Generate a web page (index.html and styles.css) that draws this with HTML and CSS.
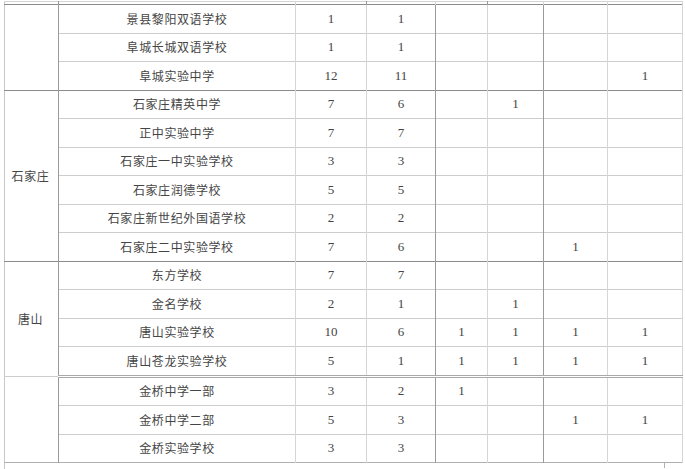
FILE: index.html
```html
<!DOCTYPE html>
<html lang="zh">
<head>
<meta charset="utf-8">
<link rel="stylesheet" href="styles.css">
</head>
<body>
<table class="grid">
  <colgroup>
    <col class="c-region"><col class="c-school"><col class="c-n1"><col class="c-n2"><col class="c-n3"><col class="c-n4"><col class="c-n5"><col class="c-n6">
  </colgroup>
  <tbody>
    <tr class="spacer"><td class="major"></td><td></td><td class="major"></td><td></td><td class="major"></td><td></td><td></td><td></td></tr>
    <tr class="group-top"><td class="region major" rowspan="3"></td><td class="name">景县黎阳双语学校</td><td>1</td><td class="major">1</td><td></td><td class="major"></td><td></td><td></td></tr>
    <tr><td class="name">阜城长城双语学校</td><td>1</td><td class="major">1</td><td></td><td class="major"></td><td></td><td></td></tr>
    <tr><td class="name">阜城实验中学</td><td>12</td><td class="major">11</td><td></td><td class="major"></td><td></td><td>1</td></tr>
    <tr class="group-top"><td class="region major" rowspan="6">石家庄</td><td class="name">石家庄精英中学</td><td>7</td><td class="major">6</td><td></td><td class="major">1</td><td></td><td></td></tr>
    <tr><td class="name">正中实验中学</td><td>7</td><td class="major">7</td><td></td><td class="major"></td><td></td><td></td></tr>
    <tr><td class="name">石家庄一中实验学校</td><td>3</td><td class="major">3</td><td></td><td class="major"></td><td></td><td></td></tr>
    <tr><td class="name">石家庄润德学校</td><td>5</td><td class="major">5</td><td></td><td class="major"></td><td></td><td></td></tr>
    <tr><td class="name">石家庄新世纪外国语学校</td><td>2</td><td class="major">2</td><td></td><td class="major"></td><td></td><td></td></tr>
    <tr><td class="name">石家庄二中实验学校</td><td>7</td><td class="major">6</td><td></td><td class="major"></td><td>1</td><td></td></tr>
    <tr class="group-top"><td class="region major" rowspan="4">唐山</td><td class="name">东方学校</td><td>7</td><td class="major">7</td><td></td><td class="major"></td><td></td><td></td></tr>
    <tr><td class="name">金名学校</td><td>2</td><td class="major">1</td><td></td><td class="major">1</td><td></td><td></td></tr>
    <tr><td class="name">唐山实验学校</td><td>10</td><td class="major">6</td><td>1</td><td class="major">1</td><td>1</td><td>1</td></tr>
    <tr class="break-after"><td class="name">唐山苍龙实验学校</td><td>5</td><td class="major">1</td><td>1</td><td class="major">1</td><td>1</td><td>1</td></tr>
    <tr class="after-break"><td class="region major" rowspan="3"></td><td class="name">金桥中学一部</td><td>3</td><td class="major">2</td><td>1</td><td class="major"></td><td></td><td></td></tr>
    <tr><td class="name">金桥中学二部</td><td>5</td><td class="major">3</td><td></td><td class="major"></td><td>1</td><td>1</td></tr>
    <tr><td class="name">金桥实验学校</td><td>3</td><td class="major">3</td><td></td><td class="major"></td><td></td><td></td></tr>
  </tbody>
</table>
<div class="tail"><span class="tick"></span></div>
</body>
</html>
```

FILE: styles.css
```css
html, body {
  margin: 0;
  padding: 0;
  background: #ffffff;
}

body {
  width: 685px;
  height: 469px;
  overflow: hidden;
}

.grid {
  margin: 1px 0 0 4px;
  width: 678px;
  table-layout: fixed;
  border-collapse: collapse;
  border-top: 1px solid #d4d4d4;
  border-left: 1px solid #c8c8c8;
  border-right: 1px solid #c8c8c8;
  border-bottom: 1px solid #b0b0b0;
  font-family: "Liberation Serif", "Noto Sans CJK SC", serif;
  font-size: 13px;
  color: #444444;
}

.c-region { width: 54px; }
.c-school { width: 237px; }
.c-n1 { width: 71px; }
.c-n2 { width: 69px; }
.c-n3 { width: 52px; }
.c-n4 { width: 56px; }
.c-n5 { width: 64px; }
.c-n6 { width: 75px; }

.grid td {
  height: 27.5px;
  padding: 0;
  text-align: center;
  vertical-align: middle;
  border-top: 1px solid #cdcdcd;
  border-right: 1px solid #d6d6d6;
  line-height: 14px;
}

.grid td.major {
  border-right: 1px solid #9a9a9a;
}

.grid td.name,
.grid td.region {
  font-family: "Noto Sans CJK SC", sans-serif;
  font-size: 12px;
  letter-spacing: 0.6px;
  color: #454545;
}

.grid td.region {
  padding-right: 2px;
}

.grid tr.spacer td {
  height: 2px;
  border-top: 1px solid #d4d4d4;
}

.grid tr.group-top td {
  border-top: 1px solid #8c8c8c;
}

.grid tr.break-after td {
  border-bottom: 3px double #a8a8a8;
}

.tail {
  margin-left: 4px;
  height: 6px;
  border-left: 1px solid #c8c8c8;
  display: flex;
}

.tick {
  margin-left: 659px;
  width: 1px;
  height: 5px;
  background: #b0b0b0;
}
```
